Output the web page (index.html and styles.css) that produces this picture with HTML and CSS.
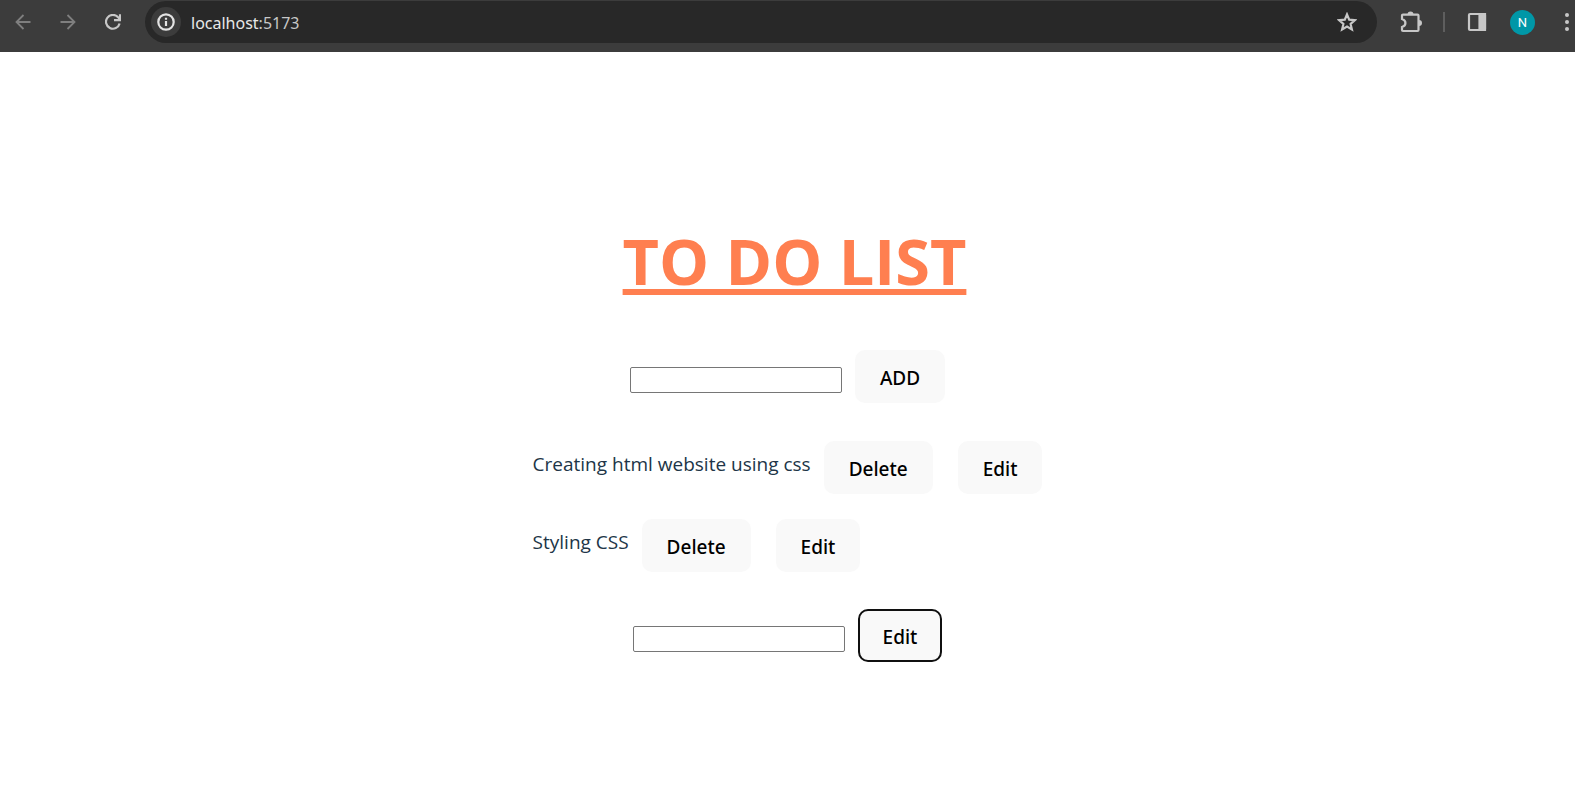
FILE: index.html
```html
<!DOCTYPE html>
<html lang="en">
<head>
<meta charset="utf-8">
<title>To Do List</title>
<link rel="stylesheet" href="styles.css">
</head>
<body>
<header class="toolbar">
  <nav class="nav">
    <button class="icon-btn dim" aria-label="Back"><svg width="16" height="16" viewBox="0 0 16 16"><path d="M15.5 8H2M8.500 1L1.500 8l7 7"/></svg></button>
    <button class="icon-btn dim" aria-label="Forward"><svg width="16" height="16" viewBox="0 0 16 16"><path d="M.5 8H14M7.500 1l7 7-7 7"/></svg></button>
    <button class="icon-btn" aria-label="Reload"><svg class="bold" width="16" height="16" viewBox="0 0 16 16"><path d="M14.600 9.500A6.900 6.900 0 1 1 13.200 3.400L15 5.400M15 .2V6.200H9"/></svg></button>
  </nav>
  <div class="address">
    <button class="site-info" aria-label="Site information"><svg class="bold" width="18" height="18" viewBox="0 0 18 18"><circle cx="9" cy="9" r="7.700"/><path d="M9 8v5M9 4.800v2"/></svg></button>
    <span class="url">localhost<span class="port">:5173</span></span>
    <button class="icon-btn" aria-label="Bookmark"><svg class="bold" width="20" height="20" viewBox="0 0 20 20"><path d="M10 2.400l2.200 5.300 5.700.5-4.300 3.700 1.300 5.600L10 14.500l-4.900 3 1.300-5.600L2.100 8.200l5.700-.5z"/></svg></button>
  </div>
  <div class="tools">
    <button class="icon-btn" aria-label="Extensions"><svg class="bold" width="22" height="22" viewBox="0 0 22 22"><path d="M3.500 3.600H17.500a1 1 0 0 1 1 1V19a1 1 0 0 1-1 1H3a1 1 0 0 1-1-1V16c4.600-1.400 4.600-6.600 0-8V4.600a1 1 0 0 1 1-1z"/><path class="dot" d="M7.500 3.500a3 3 0 0 1 6 0zM19 9a3 3 0 0 1 0 6z"/></svg></button>
    <span class="divider"></span>
    <button class="icon-btn" aria-label="Side panel"><svg class="bold" width="20" height="20" viewBox="0 0 20 20"><rect x="2" y="2" width="16" height="16" rx="1"/><path class="solid" d="M12.500 2H18v16h-5.500z"/></svg></button>
    <button class="avatar" aria-label="Profile">N</button>
    <button class="icon-btn menu" aria-label="Menu"><svg width="6" height="20" viewBox="0 0 6 20"><g class="dot"><circle cx="3" cy="3" r="2"/><circle cx="3" cy="10" r="2"/><circle cx="3" cy="17" r="2"/></g></svg></button>
  </div>
</header>
<main class="app">
  <h1 class="title">TO DO LIST</h1>
  <form class="entry">
    <input class="field" type="text" aria-label="New task">
    <button class="btn" type="button">ADD</button>
  </form>
  <ul class="list">
    <li class="task"><span class="task-text">Creating html website using css</span><button class="btn">Delete</button><button class="btn edit">Edit</button></li>
    <li class="task"><span class="task-text">Styling CSS</span><button class="btn">Delete</button><button class="btn edit">Edit</button></li>
  </ul>
  <form class="entry">
    <input class="field" type="text" aria-label="Edit task">
    <button class="btn active" type="button">Edit</button>
  </form>
</main>
</body>
</html>
```
FILE: styles.css
```css
* { box-sizing: border-box; }

body {
  margin: 0;
  background: #fff;
  color: #213547;
  font-family: "Segoe UI", "Open Sans", sans-serif;
  font-size: 19px;
  line-height: 30px;
}

button {
  border: 0;
  padding: 0;
  background: none;
  font-family: inherit;
}

.toolbar {
  display: flex;
  align-items: flex-start;
  height: 52px;
  padding-top: 1px;
  background: #3c3c3c;
  overflow: hidden;
}

.nav {
  display: flex;
  gap: 29px;
  padding: 0 24px 0 15px;
}

.icon-btn {
  display: flex;
  align-items: center;
  justify-content: center;
  height: 42px;
  color: #c7c7c7;
}

.dim { color: #7f7f7f; }

svg {
  display: block;
  fill: none;
  stroke: currentColor;
  stroke-width: 1.8;
}

.bold { stroke-width: 2.2; }
.solid { fill: currentColor; }
.dot { fill: currentColor; stroke: none; }

.address {
  display: flex;
  flex: 1;
  align-items: center;
  height: 42px;
  padding: 0 20px 0 6px;
  border-radius: 21px;
  background: #282828;
}

.site-info {
  display: flex;
  align-items: center;
  justify-content: center;
  width: 30px;
  height: 30px;
  border-radius: 50%;
  background: #3c3c3c;
  color: #e3e3e3;
}

.url {
  flex: 1;
  padding: 1px 0 0 10px;
  color: #e8e8e8;
  font-family: "Segoe UI", "Noto Sans", sans-serif;
  font-size: 16px;
}

.port { color: #c7c7c7; }

.tools {
  display: flex;
  align-items: center;
  height: 42px;
  padding-left: 23px;
}

.divider {
  width: 2px;
  height: 20px;
  margin: 0 22px 0 21px;
  background: #5e5e5e;
}

.avatar {
  width: 25px;
  height: 25px;
  margin: 0 29px 0 23px;
  border-radius: 50%;
  background: #0097a7;
  color: #fff;
  font-family: Roboto, sans-serif;
  font-size: 13px;
  line-height: 25px;
}

.menu { margin-right: 5px; }

.app {
  display: flex;
  flex-direction: column;
  align-items: center;
  padding-top: 174px;
}

.title {
  margin: 0 0 54px;
  padding-left: 14px;
  color: coral;
  font-size: 63px;
  font-weight: 700;
  line-height: 70px;
  text-decoration: underline;
  text-decoration-thickness: 6px;
  text-underline-offset: 4px;
  text-decoration-skip-ink: none;
}

.entry {
  display: flex;
  align-items: center;
  gap: 13px;
}

.field {
  width: 212px;
  height: 26px;
  margin-top: 7px;
  border: 1px solid #767676;
  border-radius: 2px;
  background: #fff;
  font: inherit;
}

.btn {
  padding: 13px 25px 10px;
  border-radius: 10px;
  background: #f9f9f9;
  color: #000;
  font-family: "Segoe UI", "Noto Sans", sans-serif;
  font-size: 19px;
  font-weight: 500;
  line-height: 30px;
}

.active {
  outline: 2px solid #101010;
  outline-offset: -2px;
}

.list {
  display: flex;
  flex-direction: column;
  gap: 25px;
  margin: 38px 0 37px;
  padding: 0;
  list-style: none;
}

.task {
  display: flex;
  align-items: flex-start;
}

.task-text { padding: 8px 13px 0 0; }
.edit { margin-left: 25px; }
```
